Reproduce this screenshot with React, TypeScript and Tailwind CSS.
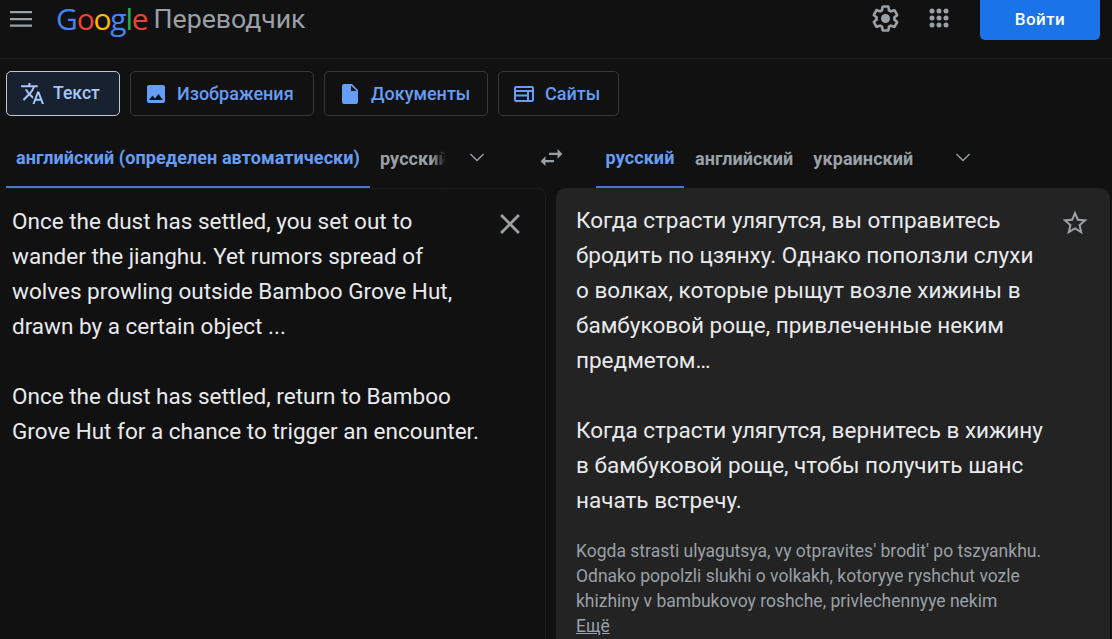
import React from "react";

const Chevron = () => (
  <svg width="32" height="32" viewBox="0 0 24 24" fill="#9aa0a6"><path d="M7.41 8.59 12 13.17l4.59-4.58L17.3 9.3 12 14.6 6.7 9.3z" /></svg>
);

const Tab = ({ active, w, icon, label }: { active?: boolean; w: string; icon: React.ReactNode; label: string }) => (
  <div className={`${w} h-[45px] shrink-0 rounded-[5px] border flex items-center pl-[13px] font-medium ${active ? "gap-[8px] text-[17.6px] border-[#c4c7ca] bg-[#18212f] text-[#a8c7fa]" : "gap-[9px] text-[18px] border-[#36383b] text-[#669df6]"}`}>
    {icon}
    <span className="pb-[1px]">{label}</span>
  </div>
);

const Lang = ({ label, cls }: { label: string; cls?: string }) => (
  <span className={`text-[18px] font-bold tracking-[0.08px] whitespace-nowrap ${cls ?? "text-[#9aa0a6]"}`}>{label}</span>
);

export default function App() {
  return (
    <div className="w-[1112px] h-[639px] overflow-hidden bg-[#111111] font-['Roboto',sans-serif]">
      <header className="h-[59px] border-b border-[#1e1f20] flex items-start">
        <div className="w-[42px] h-[38px] flex items-center justify-center shrink-0">
          <svg width="24" height="24" viewBox="0 0 24 24" fill="#9aa0a6"><path d="M1 4h22v2.2H1zM1 11h22v2.2H1zM1 17.6h22v2.2H1z" /></svg>
        </div>
        <div className="ml-[14px] h-[38px] flex items-center whitespace-nowrap">
          <span className="flex font-['Open_Sans',sans-serif] text-[30px] tracking-[-1.2px] leading-[38px]">
            <span className="block text-[#4285f4]">G</span>
            <span className="block text-[#ea4335]">o</span>
            <span className="block text-[#fbbc04]">o</span>
            <span className="block text-[#4285f4]">g</span>
            <span className="block text-[#34a853]">l</span>
            <span className="block text-[#ea4335]">e</span>
          </span>
          <span className="ml-[6px] text-[26.7px] text-[#9aa0a6] leading-[38px]">Переводчик</span>
        </div>
        <div className="ml-auto flex items-start">
          <div className="w-[24px] h-[36px] flex items-center justify-center">
            <svg width="31" height="31" viewBox="0 0 24 24" fill="#9aa0a6" className="shrink-0"><path d="M13.85 22.25h-3.7c-.74 0-1.36-.54-1.45-1.27l-.27-1.89c-.27-.14-.53-.29-.79-.46l-1.8.72c-.7.26-1.47-.03-1.81-.65L2.2 15.53c-.35-.66-.2-1.44.36-1.88l1.53-1.19c-.01-.15-.02-.3-.02-.46 0-.15.01-.31.02-.46l-1.52-1.19c-.59-.45-.74-1.26-.37-1.88l1.85-3.19c.34-.62 1.11-.9 1.79-.63l1.81.73c.26-.17.52-.32.78-.46l.27-1.91c.09-.7.71-1.26 1.44-1.26h3.7c.74 0 1.36.54 1.45 1.27l.27 1.89c.27.14.53.29.79.46l1.8-.72c.71-.26 1.48.03 1.82.65l1.84 3.18c.36.66.2 1.44-.36 1.88l-1.52 1.19c.01.15.02.3.02.46s-.01.31-.02.46l1.52 1.19c.56.45.72 1.23.37 1.86l-1.86 3.22c-.34.62-1.11.9-1.8.63l-1.8-.72c-.26.17-.52.32-.78.46l-.27 1.91c-.1.68-.72 1.22-1.46 1.22zm-3.23-2h2.76l.37-2.55.53-.22c.44-.18.88-.44 1.34-.78l.45-.34 2.38.96 1.38-2.4-2.03-1.58.07-.56c.03-.26.06-.51.06-.78s-.03-.53-.06-.78l-.07-.56 2.03-1.58-1.39-2.4-2.39.96-.45-.35c-.42-.32-.87-.58-1.33-.77l-.52-.22-.37-2.55h-2.76l-.37 2.55-.53.21c-.44.19-.88.44-1.34.79l-.45.33-2.38-.95-1.39 2.39 2.03 1.58-.07.56a7 7 0 0 0-.06.79c0 .26.02.53.06.78l.07.56-2.03 1.58 1.38 2.4 2.39-.96.45.35c.43.33.86.58 1.33.77l.53.22.38 2.55zM12 15.5a3.5 3.5 0 1 1 0-7 3.5 3.5 0 0 1 0 7z" /></svg>
          </div>
          <div className="ml-[30px] w-[24px] h-[36px] flex items-center justify-center">
            <svg width="24" height="24" viewBox="0 0 24 24" fill="#9aa0a6"><circle cx="5" cy="5" r="2.5"/><circle cx="12" cy="5" r="2.5"/><circle cx="19" cy="5" r="2.5"/><circle cx="5" cy="12" r="2.5"/><circle cx="12" cy="12" r="2.5"/><circle cx="19" cy="12" r="2.5"/><circle cx="5" cy="19" r="2.5"/><circle cx="19" cy="19" r="2.5"/><circle cx="12" cy="19" r="2.5"/></svg>
          </div>
          <div className="ml-[29px] mr-[12px] w-[120px] h-[40px] rounded-b-[5px] bg-[#1a73e8] text-white text-[17px] tracking-[0.4px] font-medium flex items-center justify-center pb-[1px]">Войти</div>
        </div>
      </header>

      <div className="flex gap-[10px] px-[6px] pt-[12px]">
        <Tab active w="w-[114px]" label="Текст" icon={
          <svg width="25" height="25" viewBox="0 0 24 24" fill="#a8c7fa" className="shrink-0"><path d="m12.87 15.07-2.54-2.51.03-.03A17.5 17.5 0 0 0 14.07 6H17V4h-7V2H8v2H1v2h11.17A15.7 15.7 0 0 1 9 11.35 15.7 15.7 0 0 1 6.69 8h-2c.73 1.63 1.73 3.17 2.98 4.56l-5.09 5.02L4 19l5-5 3.11 3.11zM18.5 10h-2L12 22h2l1.12-3h4.75L21 22h2zm-2.62 7 1.62-4.33L19.12 17z" /></svg>
        } />
        <Tab w="w-[184px]" label="Изображения" icon={
          <svg width="24" height="24" viewBox="0 0 24 24" fill="#669df6"><path d="M21 19V5a2 2 0 0 0-2-2H5a2 2 0 0 0-2 2v14a2 2 0 0 0 2 2h14a2 2 0 0 0 2-2zM8.5 13.5l2.5 3 3.5-4.5 4.5 6H5z" /></svg>
        } />
        <Tab w="w-[164px]" label="Документы" icon={
          <svg width="24" height="24" viewBox="0 0 24 24" fill="#669df6"><path d="M14 2H6a2 2 0 0 0-2 2v16a2 2 0 0 0 2 2h12a2 2 0 0 0 2-2V8l-6-6zm-1 7V3.5L18.5 9H13z" /></svg>
        } />
        <Tab w="w-[121px]" label="Сайты" icon={
          <svg width="24" height="24" viewBox="0 0 24 24" fill="#669df6"><path d="M20 4H4a2 2 0 0 0-2 2v12a2 2 0 0 0 2 2h16a2 2 0 0 0 2-2V6a2 2 0 0 0-2-2zM4 10h11v2.5H4zm0 4.5h11V18H4zM20 18h-3v-8h3zM4 8V6h16v2z" /></svg>
        } />
      </div>

      <div className="flex pt-[14px] h-[72px]">
        <div className="w-[546px] flex items-stretch pl-[6px] shrink-0">
          <div className="w-[364px] border-b-2 border-[#4a78c4] flex items-center justify-center pb-[2px]">
            <Lang label="английский (определен автоматически)" cls="text-[#669df6]" />
          </div>
          <div className="relative w-[66px] ml-[10px] flex items-center overflow-hidden pb-[2px]">
            <Lang label="русский" />
            <div className="absolute right-0 top-0 bottom-0 w-[14px] bg-gradient-to-r from-transparent to-[#111111]" />
          </div>
          <div className="ml-[15px] flex items-center pb-[2px]"><Chevron /></div>
        </div>
        <div className="flex-1 flex items-stretch">
          <div className="w-[50px] flex items-center justify-center -ml-[20px] shrink-0 pb-[4px]">
            <svg width="29" height="29" viewBox="0 0 24 24" fill="#9aa0a6"><path d="M6.99 11 3 15l3.99 4v-3H14v-2H6.99zM21 9l-3.99-4v3H10v2h7.01v3z" /></svg>
          </div>
          <div className="w-[88px] ml-[20px] border-b-2 border-[#4a78c4] flex items-center justify-center pb-[2px]">
            <Lang label="русский" cls="text-[#669df6]" />
          </div>
          <div className="ml-[11px] flex items-center pb-[2px]"><Lang label="английский" /></div>
          <div className="ml-[20px] flex items-center pb-[2px]"><Lang label="украинский" /></div>
          <div className="ml-[34px] flex items-center pb-[2px]"><Chevron /></div>
        </div>
      </div>

      <div className="flex h-[451px]">
        <div className="relative w-[546px] shrink-0 rounded-t-[8px] border-t border-r border-[#1c1d1f] pl-[12px] pt-[15px] text-[22.5px] leading-[35px] text-[#e8eaed] whitespace-pre-line">
          {"Once the dust has settled, you set out to\nwander the jianghu. Yet rumors spread of\nwolves prowling outside Bamboo Grove Hut,\ndrawn by a certain object ...\n\nOnce the dust has settled, return to Bamboo\nGrove Hut for a chance to trigger an encounter."}
          <svg width="34" height="34" viewBox="0 0 24 24" fill="#9aa0a6" className="absolute left-[493px] top-[18px]"><path d="M19 6.41 17.59 5 12 10.59 6.41 5 5 6.41 10.59 12 5 17.59 6.41 19 12 13.41 17.59 19 19 17.59 13.41 12z" /></svg>
        </div>
        <div className="relative ml-[10px] w-[554px] rounded-t-[10px] bg-[#232323] pl-[20px] pt-[15px]">
          <div className="text-[22.5px] leading-[35px] text-[#e8eaed] whitespace-pre-line">
            {"Когда страсти улягутся, вы отправитесь\nбродить по цзянху. Однако поползли слухи\nо волках, которые рыщут возле хижины в\nбамбуковой роще, привлеченные неким\nпредметом…\n\nКогда страсти улягутся, вернитесь в хижину\nв бамбуковой роще, чтобы получить шанс\nначать встречу."}
          </div>
          <div className="mt-[21px] text-[17.5px] leading-[25px] text-[#9aa0a6] whitespace-pre-line">
            {"Kogda strasti ulyagutsya, vy otpravites' brodit' po tszyankhu.\nOdnako popolzli slukhi o volkakh, kotoryye ryshchut vozle\nkhizhiny v bambukovoy roshche, privlechennyye nekim\n"}
            <span className="underline">Ещё</span>
          </div>
          <svg width="30" height="30" viewBox="0 0 24 24" fill="#9aa0a6" className="absolute right-[20px] top-[20px]"><path d="m22 9.24-7.19-.62L12 2 9.19 8.63 2 9.24l5.46 4.73L5.82 21 12 17.27 18.18 21l-1.63-7.03L22 9.24zM12 15.4l-3.76 2.27 1-4.28-3.32-2.88 4.38-.38L12 6.1l1.71 4.04 4.38.38-3.32 2.88 1 4.28L12 15.4z" /></svg>
        </div>
      </div>
    </div>
  );
}
